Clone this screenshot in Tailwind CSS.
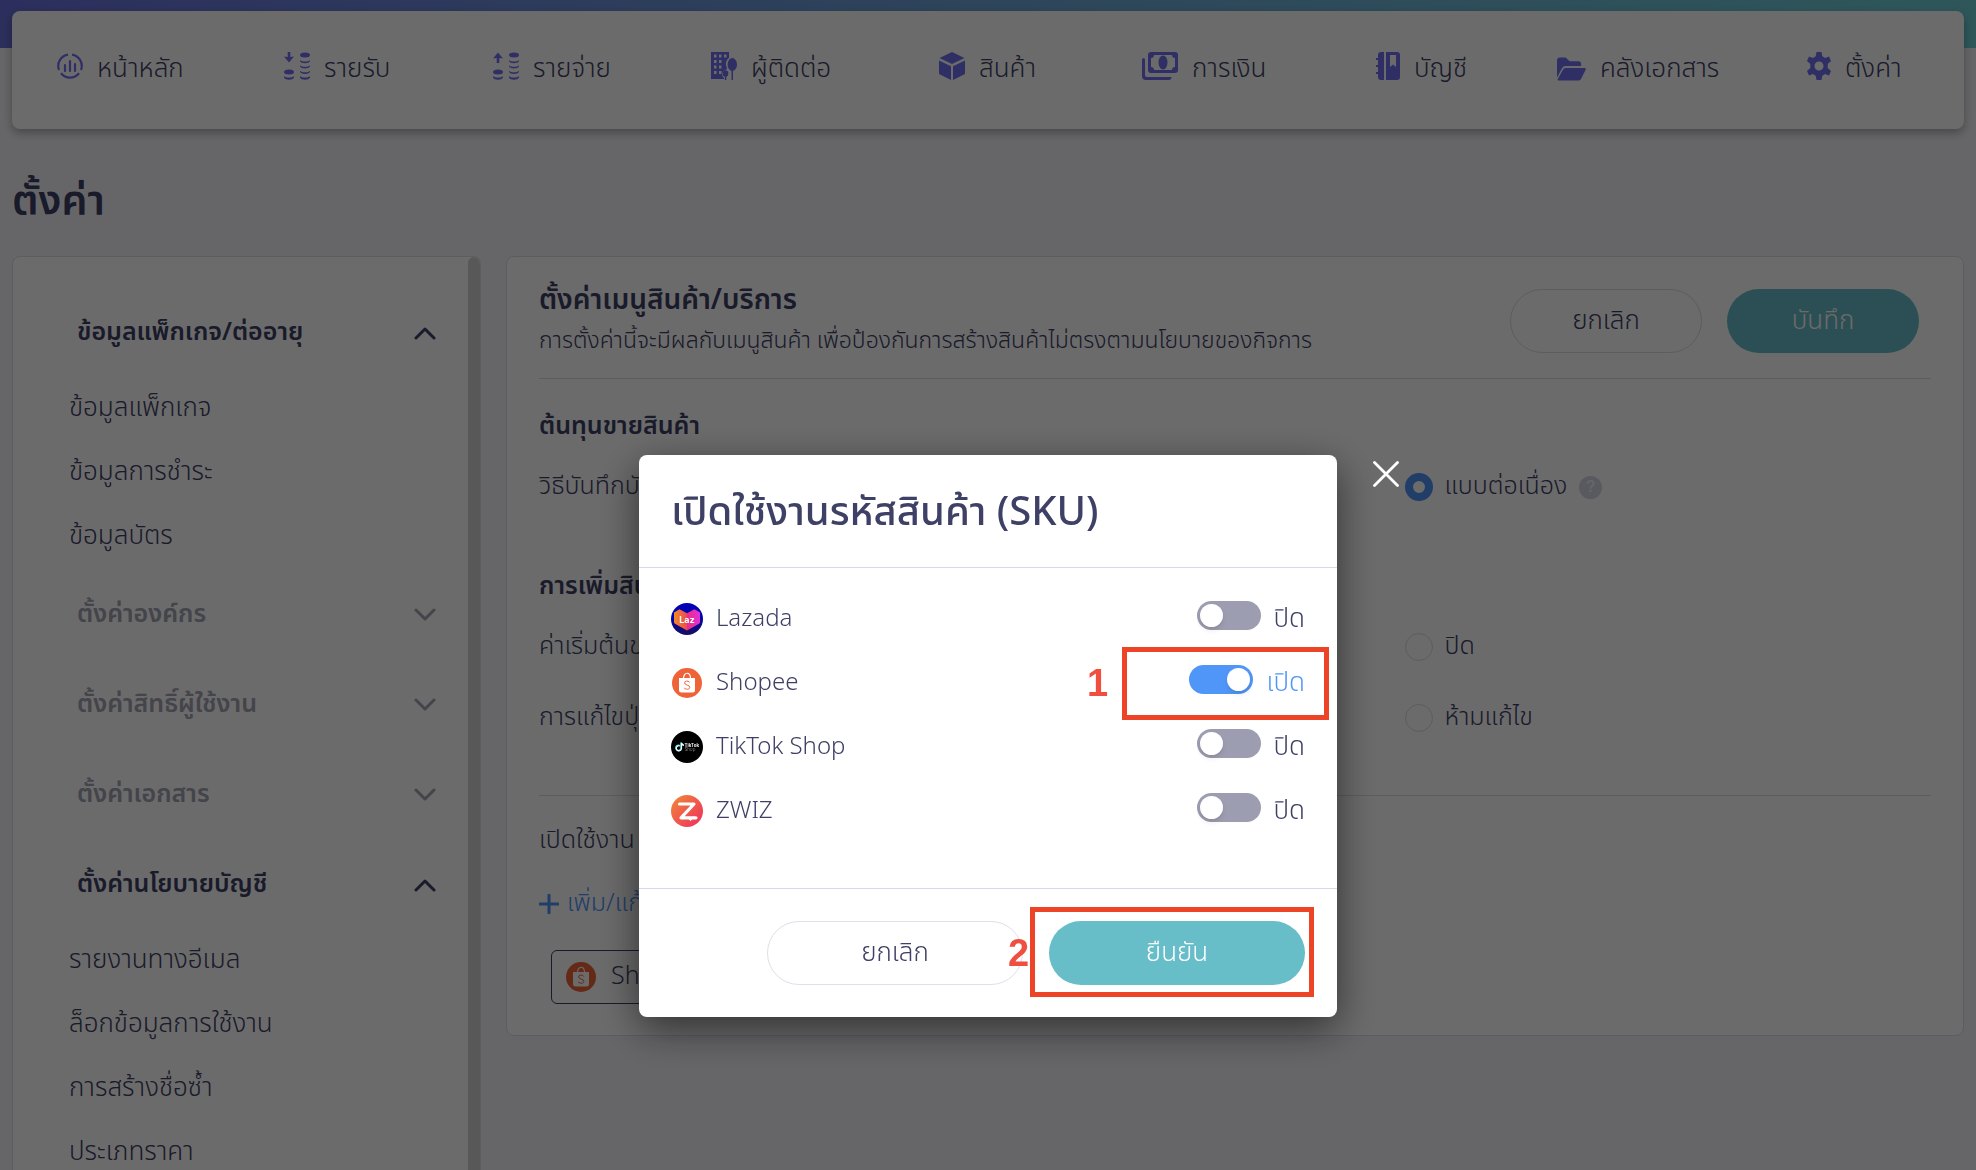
<!DOCTYPE html>
<html lang="th">
<head>
<meta charset="utf-8">
<title>ตั้งค่า</title>
<script src="https://cdn.jsdelivr.net/npm/@tailwindcss/browser@4"></script>
</head>
<body class="h-screen overflow-hidden bg-[#f3f3f8] font-['Noto_Sans_Thai','Noto_Sans',sans-serif] font-light text-[#3e4065]">
<svg class="hidden">
  <symbol id="shopee" viewBox="0 0 32 32">
    <circle cx="16" cy="16" r="15" fill="#ee6337"/>
    <path d="M12.500 11.500C12.500 4.500 19.500 4.500 19.500 11.500" fill="none" stroke="#fff" stroke-width="1.200"/>
    <path d="M8 11h16v12q0 2.500-2.500 2.500h-11Q8 25.500 8 23z" fill="#fff"/>
    <path d="M18.600 15.200c-1.500-1.700-5-1.500-5 .7 0 2.600 5.300 1.800 5.200 4.400-.1 2.400-3.800 2.500-5.600.7" fill="none" stroke="#ee6337" stroke-width="1"/>
  </symbol>
  <symbol id="up" viewBox="0 0 22 14"><path d="M2 12l9-9 9 9" fill="none" stroke="currentColor" stroke-width="3" stroke-linecap="round" stroke-linejoin="round"/></symbol>
  <symbol id="down" viewBox="0 0 22 14"><path d="M2 2l9 9 9-9" fill="none" stroke="currentColor" stroke-width="3" stroke-linecap="round" stroke-linejoin="round"/></symbol>
</svg>

<div class="relative flex h-full flex-col px-3">
  <div class="absolute inset-x-0 top-0 h-12 bg-linear-to-r from-[#6a70dd] via-[#6ea5d8] to-[#6fcfd6]"></div>

  <nav class="relative mt-[11px] h-[118px] shrink-0 rounded-lg bg-white pt-8 pl-[45px] text-[26px] shadow-[0_4px_10px_rgba(0,0,0,0.3)]">
    <ul class="grid h-[52px] grid-cols-[227fr_209fr_218fr_228fr_203fr_234fr_181fr_250fr_157fr] items-center whitespace-nowrap">
      <li><a href="#" class="flex items-center gap-[14px]">
        <svg class="-mt-1.5 h-7 w-[26px] text-[#7070f2]" viewBox="0 0 26 26" fill="none" stroke="currentColor" stroke-width="2.200"><path d="M11 1.600A11.500 11.500 0 0 0 2 17M15 1.600A11.500 11.500 0 0 1 24 17M4 20.200a11.500 11.500 0 0 0 18 0"/><path d="M8 12v6M13 8v10M18 11v7" stroke-linecap="round"/></svg>หน้าหลัก</a></li>
      <li><a href="#" class="flex items-center gap-[14px]">
        <svg class="-mt-1.5 h-7 w-[26px] text-[#7070f2]" viewBox="0 0 26 28" fill="currentColor"><path d="M3.700 0h2.600v5L10 4.500 5 10.500 0 4.500 3.700 5z"/><ellipse cx="5" cy="20" rx="5" ry="2.500"/><ellipse cx="21" cy="3" rx="5" ry="2.500"/><path d="M0 24c2 2 8 2 10 0v1.500c-1 3-9 3-10 0zM16 8c2 2 8 2 10 0v1c-1 3-9 3-10 0zM16 13.300c2 2 8 2 10 0v1c-1 3-9 3-10 0zM16 18.700c2 2 8 2 10 0v1c-1 3-9 3-10 0zM16 24c2 2 8 2 10 0v1.500c-1 3-9 3-10 0z"/></svg>รายรับ</a></li>
      <li><a href="#" class="flex items-center gap-[14px]">
        <svg class="-mt-1.5 h-7 w-[26px] text-[#7070f2]" viewBox="0 0 26 28" fill="currentColor"><path d="M3.700 11h2.600V6l3.700.500L5 .5 0 6.500 3.700 6z"/><ellipse cx="5" cy="20" rx="5" ry="2.500"/><ellipse cx="21" cy="3" rx="5" ry="2.500"/><path d="M0 24c2 2 8 2 10 0v1.500c-1 3-9 3-10 0zM16 8c2 2 8 2 10 0v1c-1 3-9 3-10 0zM16 13.300c2 2 8 2 10 0v1c-1 3-9 3-10 0zM16 18.700c2 2 8 2 10 0v1c-1 3-9 3-10 0zM16 24c2 2 8 2 10 0v1.500c-1 3-9 3-10 0z"/></svg>รายจ่าย</a></li>
      <li><a href="#" class="flex items-center gap-[14px]">
        <svg class="-mt-1.5 h-7 w-[26px] text-[#7070f2]" viewBox="0 0 26 28" fill="currentColor"><path fill-rule="evenodd" d="M0 0h18v6c-3 2-4 6-2 10l-1 2c-4 0-5 6-2 8v1H0zM3 2.500v3h2.500v-3zm5 0v3h2.500v-3zm5 0v3h2.500v-3zM3 8v3h2.500V8zm5 0v3h2.500V8zM3 13.500v3h2.500v-3zm5 0v3h2.500v-3zM3 19v3h2.500v-3zm5 0v3h2.500v-3z"/><ellipse cx="21.300" cy="12.500" rx="4.700" ry="6.500"/><path d="M20.500 18H22v10h-1.500z"/><ellipse cx="14.500" cy="21.500" rx="2.800" ry="3.300"/><path d="M13.800 24h1.500v4h-1.500z"/></svg>ผู้ติดต่อ</a></li>
      <li><a href="#" class="flex items-center gap-[14px]">
        <svg class="-mt-1.5 h-7 w-[26px] text-[#7070f2]" viewBox="0 0 26 28" fill="currentColor"><path d="M13 0l12.500 6L13 12 .5 6zM0 8.500l12 5.700V28L0 22zM26 8.500l-12 5.700V28l12-6z"/></svg>สินค้า</a></li>
      <li><a href="#" class="flex items-center gap-[14px]">
        <svg class="-mt-1.5 h-7 w-9 text-[#7070f2]" viewBox="0 0 36 28" fill="currentColor"><path fill-rule="evenodd" d="M9 0h24q3 0 3 3v15q0 3-3 3H9q-3 0-3-3V3q0-3 3-3zm3 3q0 3-3 3v9q3 0 3 3h18q0-3 3-3V6q-3 0-3-3z"/><ellipse cx="21" cy="10.500" rx="4.500" ry="7"/><path d="M0 8q0-2 1.500-2T3 8v15q0 2 2 2h24.500q0 3-3 3H4q-4 0-4-4z"/></svg>การเงิน</a></li>
      <li><a href="#" class="flex items-center gap-[14px]">
        <svg class="-mt-1.5 h-7 w-6 text-[#7070f2]" viewBox="0 0 24 28" fill="currentColor"><path d="M5 0h3v28H5q-3 0-3-3v-3H0v-2h2v-5H0v-2h2V8H0V6h2V3q0-3 3-3z"/><path fill-rule="evenodd" d="M10 0h11q3 0 3 3v22q0 3-3 3H10zm4 3v12l3-2.500 3 2.500V3z"/></svg>บัญชี</a></li>
      <li><a href="#" class="flex items-center gap-[14px]">
        <svg class="h-6 w-[29px] text-[#7070f2]" viewBox="0 0 30 24" fill="currentColor"><path d="M0 21V3q0-3 3-3h6l4 4h9q3 0 3 3v2H9Q6.500 9 5 11.500z"/><path d="M9 11h19.500q2 0 1 2L25 22q-1 2-3 2H2q-2 0-1-2l5-9q1-2 3-2z"/></svg>คลังเอกสาร</a></li>
      <li><a href="#" class="flex items-center gap-[14px]">
        <svg class="-mt-1.5 h-7 w-6 text-[#7070f2]" viewBox="0 0 24 28" fill="currentColor"><path fill-rule="evenodd" d="M9.500 0h5l.8 4.300 2.700 1.600L22 4.500 24 9l-3.300 3v4L24 19l-2 4.500-4-1.400-2.700 1.600-.8 4.300h-5l-.8-4.300L6 22.100l-4 1.400L0 19l3.300-3v-4L0 9l2-4.500 4 1.400 2.700-1.600zM12 9.500a4.500 4.500 0 1 0 0 9 4.500 4.500 0 0 0 0-9z"/></svg>ตั้งค่า</a></li>
    </ul>
  </nav>

  <h1 class="mt-[43px] h-[60px] shrink-0 text-[41px] leading-[60px] font-semibold">ตั้งค่า</h1>

  <div class="mt-6 flex min-h-0 flex-1 items-start gap-[25px]">
    <aside class="flex h-full w-[469px] shrink-0 overflow-hidden rounded-t-lg border border-b-0 border-[#dcdcec] bg-white">
      <div class="min-w-0 flex-1 pt-[31px] text-[26px]">
        <button class="flex h-[90px] w-full items-center justify-between pr-8 pl-16 text-[25px] font-semibold">ข้อมูลแพ็กเกจ/ต่ออายุ<svg class="h-[14px] w-[22px]"><use href="#up"/></svg></button>
        <ul class="-mt-0.5 mb-0.5 pl-14">
          <li><a href="#" class="flex h-16 items-center">ข้อมูลแพ็กเกจ</a></li>
          <li><a href="#" class="flex h-16 items-center">ข้อมูลการชำระ</a></li>
          <li><a href="#" class="flex h-16 items-center">ข้อมูลบัตร</a></li>
        </ul>
        <button class="flex h-[90px] w-full items-center justify-between pr-8 pl-16 text-[25px] font-semibold text-[#a2a2b4]">ตั้งค่าองค์กร<svg class="h-[14px] w-[22px]"><use href="#down"/></svg></button>
        <button class="flex h-[90px] w-full items-center justify-between pr-8 pl-16 text-[25px] font-semibold text-[#a2a2b4]">ตั้งค่าสิทธิ์ผู้ใช้งาน<svg class="h-[14px] w-[22px]"><use href="#down"/></svg></button>
        <button class="flex h-[90px] w-full items-center justify-between pr-8 pl-16 text-[25px] font-semibold text-[#a2a2b4]">ตั้งค่าเอกสาร<svg class="h-[14px] w-[22px]"><use href="#down"/></svg></button>
        <button class="flex h-[90px] w-full items-center justify-between pr-8 pl-16 text-[25px] font-semibold">ตั้งค่านโยบายบัญชี<svg class="h-[14px] w-[22px]"><use href="#up"/></svg></button>
        <ul class="-mt-0.5 pl-14">
          <li><a href="#" class="flex h-16 items-center">รายงานทางอีเมล</a></li>
          <li><a href="#" class="flex h-16 items-center">ล็อกข้อมูลการใช้งาน</a></li>
          <li><a href="#" class="flex h-16 items-center">การสร้างชื่อซ้ำ</a></li>
          <li><a href="#" class="flex h-16 items-center">ประเภทราคา</a></li>
        </ul>
      </div>
      <div class="w-3 rounded-t-full bg-[#d2d2d2]"></div>
    </aside>

    <main class="min-w-0 flex-1 rounded-lg border border-[#dcdcec] bg-white pr-8 pb-[31px] pl-8 text-[25px]">
      <header class="flex h-[122px] items-center justify-between border-b border-[#dcdcec] pt-[7px] pr-3">
        <div>
          <h2 class="text-[28px] leading-10 font-semibold">ตั้งค่าเมนูสินค้า/บริการ</h2>
          <p class="text-[23px] leading-10">การตั้งค่านี้จะมีผลกับเมนูสินค้า เพื่อป้องกันการสร้างสินค้าไม่ตรงตามนโยบายของกิจการ</p>
        </div>
        <div class="flex shrink-0 gap-[25px] text-[26px]">
          <button class="h-16 w-48 rounded-full border border-[#dcdcea]">ยกเลิก</button>
          <button class="h-16 w-48 rounded-full bg-[#67bdc8] text-white">บันทึก</button>
        </div>
      </header>

      <section class="pt-[22px]">
        <h3 class="leading-[50px] font-semibold">ต้นทุนขายสินค้า</h3>
        <div class="grid h-[72px] grid-cols-[865fr_526fr] items-center">
          <span>วิธีบันทึกบัญชี</span>
          <label class="flex items-center gap-3"><input type="radio" name="method" checked class="size-7 appearance-none rounded-full border-[8px] border-[#4f93f7] bg-white">แบบต่อเนื่อง
            <span class="flex size-[23px] items-center justify-center rounded-full bg-[#d4d7e2] font-['Liberation_Sans',sans-serif] text-base font-bold text-[#f0f0f8]">?</span></label>
        </div>
      </section>

      <section class="border-b border-[#dcdcec] pt-[38px] pb-[42px]">
        <h3 class="leading-[50px] font-semibold">การเพิ่มสินค้า</h3>
        <div class="grid h-[72px] grid-cols-[865fr_526fr] items-center">
          <span>ค่าเริ่มต้นของ</span>
          <label class="flex items-center gap-3"><input type="radio" name="default" class="size-7 appearance-none rounded-full border border-[#dcdcea]">ปิด</label>
        </div>
        <div class="grid h-[70px] grid-cols-[865fr_526fr] items-center">
          <span>การแก้ไขปุ่ม</span>
          <label class="flex items-center gap-3"><input type="radio" name="edit" class="size-7 appearance-none rounded-full border border-[#dcdcea]">ห้ามแก้ไข</label>
        </div>
      </section>

      <section class="pt-3">
        <p class="leading-[64px]">เปิดใช้งาน</p>
        <a href="#" class="flex h-[64px] items-center gap-2 text-[#4f93f7]"><svg class="size-5" viewBox="0 0 20 20"><path d="M10 1v18M1 10h18" stroke="currentColor" stroke-width="3" stroke-linecap="round"/></svg>เพิ่ม/แก้ไข</a>
        <div class="mt-[14px] ml-3 flex h-[54px] w-44 items-center gap-[14px] rounded-md border border-[#3e4065] px-[13px]"><svg class="size-8"><use href="#shopee"/></svg>Shopee</div>
      </section>
    </main>
  </div>
</div>

<div class="fixed inset-0 flex items-start justify-center bg-black/58 pt-[455px]">
  <div role="dialog" aria-labelledby="dialog-title" class="relative w-[698px] rounded-lg bg-white text-[26px] shadow-[0_12px_40px_rgba(0,0,0,0.55)]">
    <h2 id="dialog-title" class="h-[113px] border-b border-[#d9d9e8] px-8 text-[40px] leading-[116px] font-medium">เปิดใช้งานรหัสสินค้า (SKU)</h2>

    <div class="h-[320px] px-8 pt-[19px]">
      <div class="flex h-16 items-center gap-[13px]">
        <svg class="size-8" viewBox="0 0 32 32">
          <defs><linearGradient id="lz" x2="0" y2="1"><stop offset=".4" stop-color="#0202b4"/><stop offset="1" stop-color="#150f5c"/></linearGradient><linearGradient id="lh"><stop stop-color="#f08a26"/><stop offset=".5" stop-color="#ee4a52"/><stop offset=".51" stop-color="#ee2d80"/><stop offset="1" stop-color="#e030d8"/></linearGradient></defs>
          <circle cx="16" cy="16" r="16" fill="url(#lz)"/><path d="M3 9.500l5.500-3.300 7.500 4 7.500-4L29 9.500V19q0 1-1 1.700L16 27.500 4 20.700Q3 20 3 19z" fill="url(#lh)"/>
          <text x="16" y="19.500" text-anchor="middle" fill="#fff" font-family="Inter, sans-serif" font-weight="700" font-size="9">Laz</text>
        </svg>
        <label for="lazada" class="flex-1 text-2xl">Lazada</label>
        <input id="lazada" type="checkbox" class="relative mb-2 h-[29px] w-16 appearance-none rounded-full bg-[#9d9db1] before:absolute before:top-[3px] before:left-[3px] before:size-[23px] before:rounded-full before:bg-white before:shadow-md"><span>ปิด</span>
      </div>
      <div class="flex h-16 items-center gap-[13px]">
        <svg class="size-8"><use href="#shopee"/></svg>
        <label for="shop" class="flex-1 text-2xl">Shopee</label>
        <input id="shop" type="checkbox" checked class="relative mb-2 h-[29px] w-16 appearance-none rounded-full bg-[#5096f8] before:absolute before:top-[3px] before:right-[3px] before:size-[23px] before:rounded-full before:bg-white before:shadow-md"><span class="text-[#5096f8]">เปิด</span>
      </div>
      <div class="flex h-16 items-center gap-[13px]">
        <svg class="size-8" viewBox="0 0 32 32"><circle cx="16" cy="16" r="16"/>
          <path d="M8.500 14.500a2.600 2.600 0 1 0 1.500 2.500v-5.500q.5 2 2.500 2.300" fill="none" stroke="#40e0e0" stroke-width="1.500"/><path d="M9 15a2.600 2.600 0 1 0 1.500 2.500V12q.5 2 2.500 2.300" fill="none" stroke="#fff" stroke-width="1.200"/>
          <text x="13.500" y="15.500" fill="#eee" font-family="Inter, sans-serif" font-weight="700" font-size="4.500">TikTok</text><text x="13.500" y="20" fill="#999" font-family="Inter, sans-serif" font-size="4.500">Shop</text></svg>
        <label for="tiktok" class="flex-1 text-2xl">TikTok Shop</label>
        <input id="tiktok" type="checkbox" class="relative mb-2 h-[29px] w-16 appearance-none rounded-full bg-[#9d9db1] before:absolute before:top-[3px] before:left-[3px] before:size-[23px] before:rounded-full before:bg-white before:shadow-md"><span>ปิด</span>
      </div>
      <div class="flex h-16 items-center gap-[13px]">
        <svg class="size-8" viewBox="0 0 32 32"><defs><linearGradient id="zw" x2="1" y2="1"><stop stop-color="#f08a35"/><stop offset="1" stop-color="#ee2c60"/></linearGradient></defs><circle cx="16" cy="16" r="16" fill="url(#zw)"/><path d="M8.500 9H23L10 22.800h15" fill="none" stroke="#fff" stroke-width="3.200" stroke-linecap="round" stroke-linejoin="round"/><path d="M16.500 23h6l-3 3z" fill="#fff"/></svg>
        <label for="zwiz" class="flex-1 text-2xl">ZWIZ</label>
        <input id="zwiz" type="checkbox" class="relative mb-2 h-[29px] w-16 appearance-none rounded-full bg-[#9d9db1] before:absolute before:top-[3px] before:left-[3px] before:size-[23px] before:rounded-full before:bg-white before:shadow-md"><span>ปิด</span>
      </div>
    </div>

    <div class="flex h-[129px] items-center justify-end gap-[26px] border-t border-[#d9d9e8] px-8">
      <button class="h-16 w-64 rounded-full border border-[#dfdfea]">ยกเลิก</button>
      <button class="h-16 w-64 rounded-full bg-[#67bdc8] text-white">ยืนยัน</button>
    </div>

    <button aria-label="ปิดหน้าต่าง" class="absolute top-[6px] left-[734px] size-[26px] text-white"><svg viewBox="0 0 26 26"><path d="M1.500 1.500l23 23M24.500 1.500l-23 23" stroke="currentColor" stroke-width="2.800" stroke-linecap="round"/></svg></button>

    <!-- step callouts -->
    <div class="absolute top-[192px] left-[483px] h-[73px] w-[207px] border-[5px] border-[#ed4327]"></div>
    <div class="absolute top-[452px] left-[391px] h-[90px] w-[284px] border-[5px] border-[#ed4327]"></div>
    <span class="absolute top-[208px] left-[448px] font-['Liberation_Sans',sans-serif] text-[38px] leading-[40px] font-bold text-[#f04e3e]">1</span>
    <span class="absolute top-[478px] left-[369px] font-['Liberation_Sans',sans-serif] text-[38px] leading-[40px] font-bold text-[#f04e3e]">2</span>
  </div>
</div>
</body>
</html>
